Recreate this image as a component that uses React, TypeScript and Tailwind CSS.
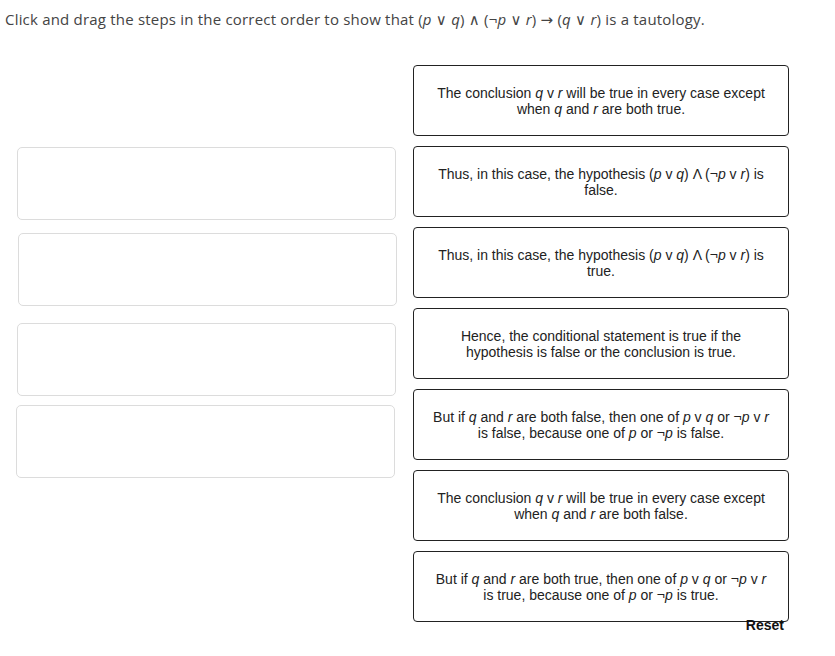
const I = ({children}: { children: React.ReactNode }) => <i>{children}</i>;
const S = ({children}: { children: React.ReactNode }) => <span className="font-['DejaVu_Sans',sans-serif] text-[15px] leading-[10px]">{children}</span>;

const steps: React.ReactNode[] = [
    <>The conclusion <I>q</I> v <I>r</I> will be true in every case except<br/>when <I>q</I> and <I>r</I> are both true.</>,
    <>Thus, in this case, the hypothesis (<I>p</I> v <I>q</I>) Λ (¬<I>p</I> v <I>r</I>) is<br/>false.</>,
    <>Thus, in this case, the hypothesis (<I>p</I> v <I>q</I>) Λ (¬<I>p</I> v <I>r</I>) is<br/>true.</>,
    <>Hence, the conditional statement is true if the<br/>hypothesis is false or the conclusion is true.</>,
    <>But if <I>q</I> and <I>r</I> are both false, then one of <I>p</I> v <I>q</I> or ¬<I>p</I> v <I>r</I><br/>is false, because one of <I>p</I> or ¬<I>p</I> is false.</>,
    <>The conclusion <I>q</I> v <I>r</I> will be true in every case except<br/>when <I>q</I> and <I>r</I> are both false.</>,
    <>But if <I>q</I> and <I>r</I> are both true, then one of <I>p</I> v <I>q</I> or ¬<I>p</I> v <I>r</I><br/>is true, because one of <I>p</I> or ¬<I>p</I> is true.</>,
];

const slots = [
    "mt-[82px] ml-[17px]",
    "mt-[13px] ml-[18px]",
    "mt-[17px] ml-[17px]",
    "mt-[9px] ml-[16px]",
];

export default function App() {
    return (
        <div className="bg-white w-[835px] h-[656px] overflow-hidden">
            <p className="h-[29px] pl-[5px] pt-[9px] text-[15px] leading-[20px] tracking-[0.2px] text-[#444] font-['Open_Sans',sans-serif]">
                Click and drag the steps in the correct order to show that (<I>p</I> <S>∨</S> <I>q</I>) <S>∧</S> (¬<I>p</I> <S>∨</S> <I>r</I>) <S>→</S> (<I>q</I> <S>∨</S> <I>r</I>) is a tautology.
            </p>

            <div className="flex mt-[36px]">
                <div className="w-[396px] flex flex-col">
                    {slots.map((s, i) => (
                        <div key={i} className={`${s} w-[379px] h-[73px] border border-[#dcdcdc] rounded-[5px]`}></div>
                    ))}
                </div>

                <div className="ml-[17px] w-[376px] flex flex-col gap-[10px] font-['Liberation_Sans',Arial,sans-serif] text-[14px] leading-[16px] text-[#222]">
                    {steps.map((s, i) => (
                        <div key={i}
                             className="h-[71px] border border-[#222] rounded-[4px] flex items-center justify-center text-center px-4">
                            <p>{s}</p>
                        </div>
                    ))}
                    <div className="-mt-[15px] pr-[5px] text-right font-bold text-[14px] leading-[16px] text-[#111] relative">
                        Reset
                    </div>
                </div>
            </div>
        </div>
    );
}
